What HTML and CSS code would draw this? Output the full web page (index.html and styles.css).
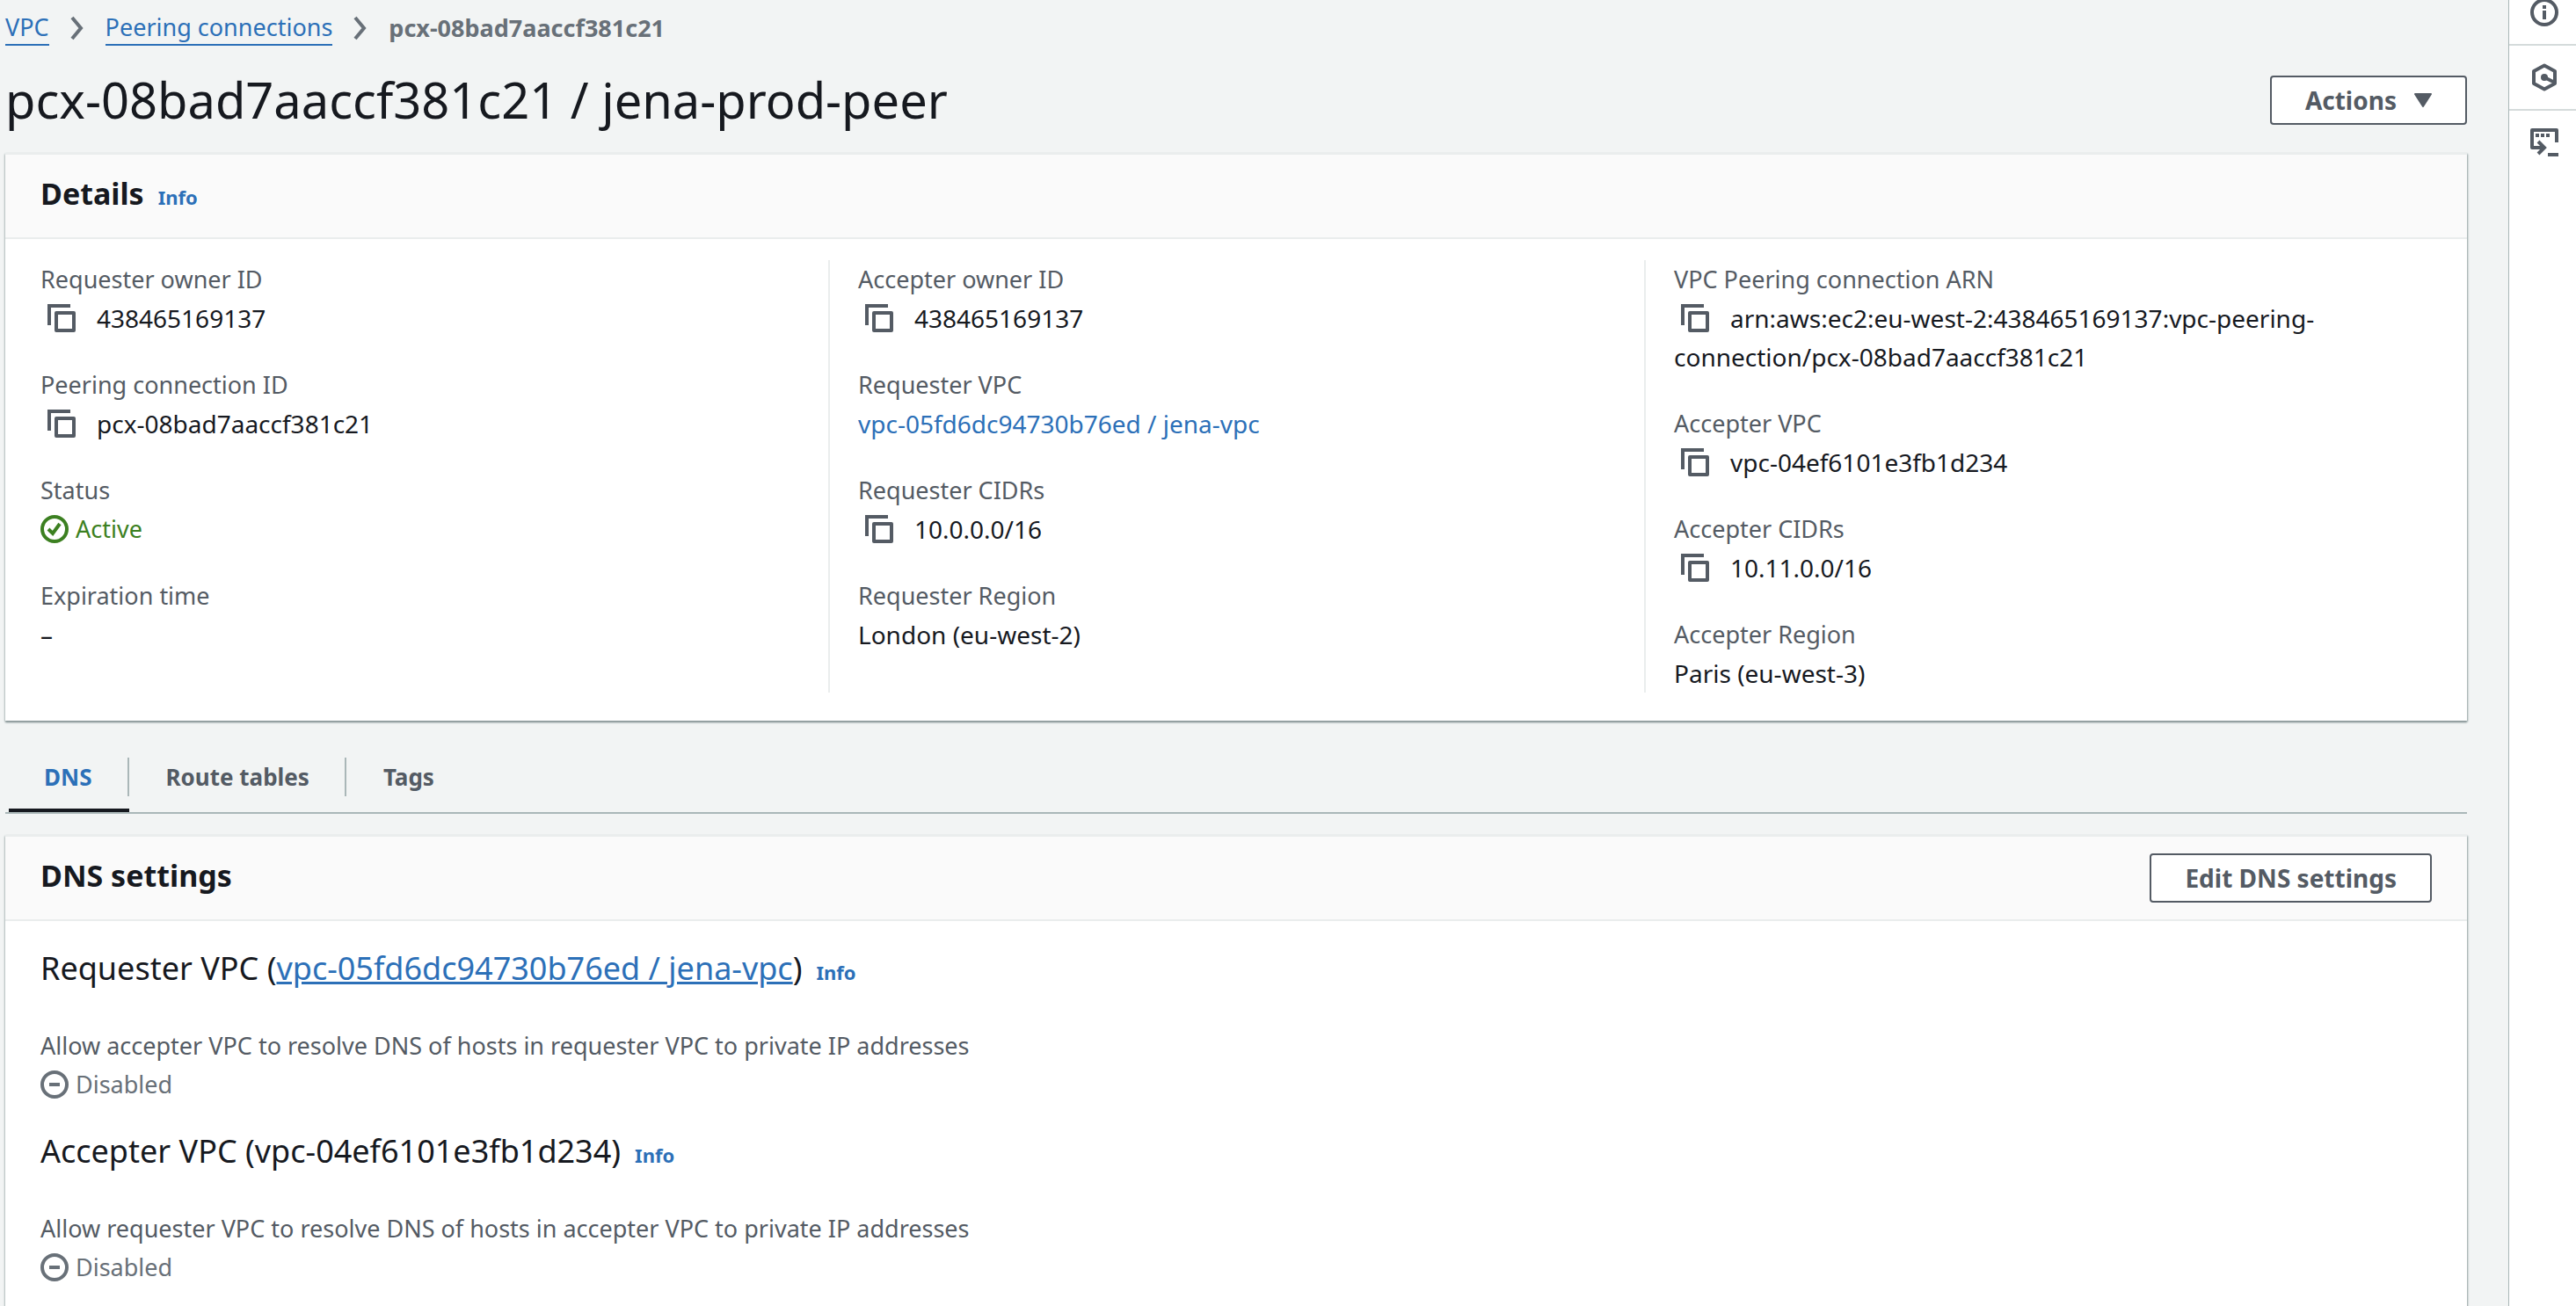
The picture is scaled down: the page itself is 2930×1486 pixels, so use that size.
FILE: index.html
```html
<!DOCTYPE html>
<html lang="en">
<head>
<meta charset="utf-8">
<meta name="viewport" content="width=device-width, initial-scale=1">
<title>pcx-08bad7aaccf381c21 | VPC</title>
<link rel="stylesheet" href="styles.css">
</head>
<body>
<svg class="sprite" aria-hidden="true">
  <symbol id="i-copy" viewBox="0 0 32 32"><path d="M2 24V2h24" /><path d="M10 10h20v20H10z" stroke-linejoin="round" /></symbol>
  <symbol id="i-check" viewBox="0 0 32 32"><circle cx="16" cy="16" r="14" /><path d="M9 16l5 5 8-11" /></symbol>
  <symbol id="i-minus" viewBox="0 0 32 32"><circle cx="16" cy="16" r="14" /><path d="M10 16h12" /></symbol>
  <symbol id="i-chevron" viewBox="0 0 16 28"><path d="M2 2l10 12L2 26" /></symbol>
</svg>
<div class="app">
  <main class="main">
    <nav class="crumbs" aria-label="Breadcrumbs">
      <a href="#vpc">VPC</a>
      <svg class="chevron"><use href="#i-chevron"/></svg>
      <a href="#peering">Peering connections</a>
      <svg class="chevron"><use href="#i-chevron"/></svg>
      <span class="current">pcx-08bad7aaccf381c21</span>
    </nav>

    <header class="page-head">
      <h1>pcx-08bad7aaccf381c21 / jena-prod-peer</h1>
      <button class="btn" type="button">Actions
        <svg class="caret" viewBox="0 0 20 16"><path d="M1 1h18l-9 14z" /></svg>
      </button>
    </header>

    <section class="card">
      <div class="card-head">
        <div class="heading">
          <h2>Details</h2>
          <a class="info" href="#details-info">Info</a>
        </div>
      </div>
      <div class="columns">
        <dl class="column">
          <div class="field"><dt>Requester owner ID</dt>
            <dd><button class="copy" type="button" aria-label="Copy"><svg class="icon"><use href="#i-copy"/></svg></button>438465169137</dd></div>
          <div class="field"><dt>Peering connection ID</dt>
            <dd><button class="copy" type="button" aria-label="Copy"><svg class="icon"><use href="#i-copy"/></svg></button>pcx-08bad7aaccf381c21</dd></div>
          <div class="field"><dt>Status</dt>
            <dd class="status ok"><svg class="icon"><use href="#i-check"/></svg>Active</dd></div>
          <div class="field"><dt>Expiration time</dt>
            <dd>–</dd></div>
        </dl>
        <dl class="column">
          <div class="field"><dt>Accepter owner ID</dt>
            <dd><button class="copy" type="button" aria-label="Copy"><svg class="icon"><use href="#i-copy"/></svg></button>438465169137</dd></div>
          <div class="field"><dt>Requester VPC</dt>
            <dd><a href="#requester-vpc">vpc-05fd6dc94730b76ed / jena-vpc</a></dd></div>
          <div class="field"><dt>Requester CIDRs</dt>
            <dd><button class="copy" type="button" aria-label="Copy"><svg class="icon"><use href="#i-copy"/></svg></button>10.0.0.0/16</dd></div>
          <div class="field"><dt>Requester Region</dt>
            <dd>London (eu-west-2)</dd></div>
        </dl>
        <dl class="column">
          <div class="field"><dt>VPC Peering connection ARN</dt>
            <dd><button class="copy" type="button" aria-label="Copy"><svg class="icon"><use href="#i-copy"/></svg></button>arn:aws:ec2:eu-west-2:438465169137:vpc-peering-<wbr>connection/pcx-08bad7aaccf381c21</dd></div>
          <div class="field"><dt>Accepter VPC</dt>
            <dd><button class="copy" type="button" aria-label="Copy"><svg class="icon"><use href="#i-copy"/></svg></button>vpc-04ef6101e3fb1d234</dd></div>
          <div class="field"><dt>Accepter CIDRs</dt>
            <dd><button class="copy" type="button" aria-label="Copy"><svg class="icon"><use href="#i-copy"/></svg></button>10.11.0.0/16</dd></div>
          <div class="field"><dt>Accepter Region</dt>
            <dd>Paris (eu-west-3)</dd></div>
        </dl>
      </div>
    </section>

    <div class="tabs" role="tablist">
      <button class="tab active" type="button" role="tab" aria-selected="true"><span>DNS</span></button>
      <button class="tab" type="button" role="tab" aria-selected="false"><span>Route tables</span></button>
      <button class="tab" type="button" role="tab" aria-selected="false"><span>Tags</span></button>
    </div>

    <section class="card">
      <div class="card-head">
        <div class="heading">
          <h2>DNS settings</h2>
        </div>
        <button class="btn" type="button">Edit DNS settings</button>
      </div>
      <div class="settings">
        <section class="setting">
          <div class="heading">
            <h3>Requester VPC (<a href="#requester-vpc">vpc-05fd6dc94730b76ed / jena-vpc</a>)</h3>
            <a class="info" href="#requester-info">Info</a>
          </div>
          <p>Allow accepter VPC to resolve DNS of hosts in requester VPC to private IP addresses</p>
          <div class="status off"><svg class="icon"><use href="#i-minus"/></svg>Disabled</div>
        </section>
        <section class="setting">
          <div class="heading">
            <h3>Accepter VPC (vpc-04ef6101e3fb1d234)</h3>
            <a class="info" href="#accepter-info">Info</a>
          </div>
          <p>Allow requester VPC to resolve DNS of hosts in accepter VPC to private IP addresses</p>
          <div class="status off"><svg class="icon"><use href="#i-minus"/></svg>Disabled</div>
        </section>
      </div>
    </section>
  </main>

  <aside class="rail">
    <button class="rail-btn" type="button" aria-label="Info">
      <svg class="icon" viewBox="0 0 32 32"><circle cx="16" cy="16" r="14" /><path d="M16 8v4M16 14v10" /></svg>
    </button>
    <button class="rail-btn" type="button" aria-label="Diagnostics">
      <svg class="icon" viewBox="0 0 32 32"><path d="M16 2.500l12 6.500v14l-12 6.500L4 23V9z" stroke-linejoin="round" /><path d="M16 16l12 6" /><circle class="solid" cx="16" cy="16" r="4" /></svg>
    </button>
    <button class="rail-btn" type="button" aria-label="CloudShell">
      <svg class="icon" viewBox="0 0 32 32"><path d="M30 16V2H2v20h14" stroke-linejoin="round" /><path d="M6 8h4M12 8h4M18 8h4M9 15l7 7-7 7M20 30h12" /></svg>
    </button>
  </aside>
</div>
</body>
</html>
```
FILE: styles.css
```css
:root {
  --text: #16191f;
  --muted: #545b64;
  --faint: #687078;
  --link: #2c70b8;
  --green: #3c8021;
  --line: #eaeded;
}

* { box-sizing: border-box; }

body {
  margin: 0;
  background: #f2f4f4;
  color: var(--text);
  font: 27px/44px "Noto Sans", "Open Sans", sans-serif;
}

h1, h2, h3, p, dl, dd { margin: 0; }
a { color: var(--link); text-decoration: none; }

button {
  margin: 0;
  padding: 0;
  border: 0;
  background: none;
  color: var(--muted);
  font: inherit;
}

.sprite { position: absolute; width: 0; height: 0; }

.icon, .chevron {
  display: block;
  flex: none;
  fill: none;
  stroke: currentColor;
  stroke-width: 4;
}
.icon { width: 32px; height: 32px; }
.solid { fill: currentColor; stroke: none; }

.app {
  display: flex;
  height: 100vh;
  overflow: hidden;
}

.main {
  flex: 1;
  min-width: 0;
  padding: 10px 47px 0 6px;
}

.crumbs {
  display: flex;
  align-items: center;
  gap: 24px;
  height: 44px;
}
.crumbs a { border-bottom: 2px solid; line-height: 38px; }
.chevron { width: 16px; height: 28px; color: var(--faint); }
.current { color: var(--faint); font-weight: 700; }

.page-head {
  display: flex;
  align-items: center;
  justify-content: space-between;
  height: 120px;
}
h1 { padding-bottom: 2px; font-size: 56px; line-height: 72px; font-weight: 400; }

.btn {
  display: flex;
  align-items: center;
  gap: 20px;
  height: 56px;
  padding: 0 38px;
  border: 2px solid var(--muted);
  border-radius: 4px;
  background: #fff;
  font-size: 28px;
  font-weight: 700;
}
.caret { width: 20px; height: 16px; fill: currentColor; stroke: currentColor; stroke-width: 2; stroke-linejoin: round; }

.card {
  border-top: 2px solid var(--line);
  background: #fff;
  box-shadow: 0 2px 2px 0 #879596, 1px 1px 2px 0 #aab7b8, -1px 1px 2px 0 #d5dbdb;
}

.card-head {
  display: flex;
  align-items: center;
  justify-content: space-between;
  height: 96px;
  padding: 0 40px;
  border-bottom: 2px solid var(--line);
  background: #fafafa;
}
.heading { display: flex; align-items: baseline; gap: 16px; }
.card-head .heading { padding-bottom: 6px; }
h2 { font-size: 34px; line-height: 44px; font-weight: 700; }
h3 { font-size: 36px; line-height: 44px; font-weight: 400; }
h3 a { text-decoration: underline; }
.info { font-size: 22px; line-height: 32px; font-weight: 700; }

.columns {
  display: grid;
  grid-template-columns: repeat(3, 1fr);
  padding: 24px 8px 32px;
}
.column {
  display: flex;
  flex-direction: column;
  gap: 32px;
  padding: 0 32px;
}
.column + .column { border-left: 2px solid var(--line); }

dt, p { color: var(--muted); }
dd { font-size: 28px; }
.copy {
  display: inline-flex;
  align-items: center;
  width: 48px;
  height: 44px;
  margin-right: 16px;
  padding-left: 8px;
  vertical-align: top;
}

.status { display: flex; align-items: center; gap: 8px; font-size: 27px; }
.ok { color: var(--green); }
.off { color: var(--faint); }

.tabs {
  display: flex;
  gap: 2px;
  height: 76px;
  margin: 30px 0 24px;
  padding-left: 4px;
  border-bottom: 2px solid #aab7b8;
}
.tab {
  padding: 12px 0 14px;
  border-bottom: 4px solid transparent;
  font-size: 26px;
  font-weight: 700;
}
.tab span {
  display: block;
  padding: 0 40px;
  border-right: 2px solid #aab7b8;
}
.tab:last-child span { border-right: 0; }
.active { border-color: var(--text); color: var(--link); }

.settings {
  display: flex;
  flex-direction: column;
  gap: 32px;
  padding: 32px 40px 40px;
}
.setting .heading { margin-bottom: 44px; }

.rail {
  flex: none;
  width: 77px;
  margin-top: -22px;
  border-left: 1px solid #aab7b8;
  background: #fff;
}
.rail-btn {
  display: flex;
  align-items: center;
  justify-content: center;
  width: 100%;
  height: 74px;
  padding-left: 4px;
  border-bottom: 2px solid #d5dbdb;
}
.rail-btn:last-child { border-color: transparent; }
```
